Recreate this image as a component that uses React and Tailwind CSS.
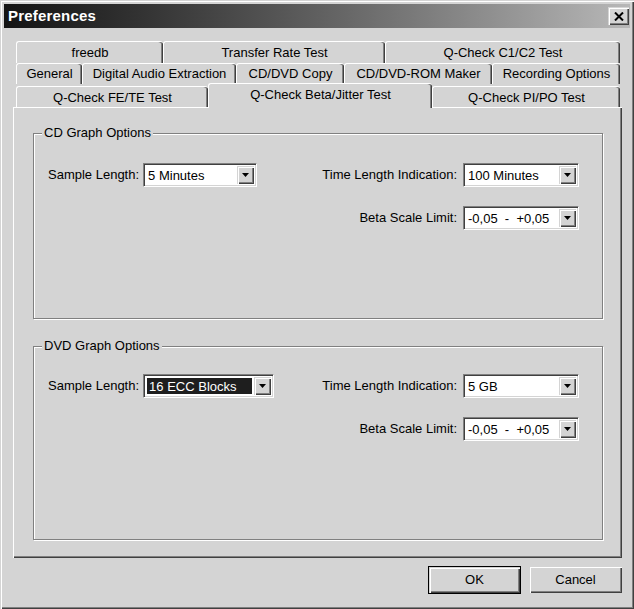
import React from 'react';

const FONT = { fontFamily: '"Liberation Sans", Arial, sans-serif' };

// raised / sunken win2k bevels
const RAISED = 'shadow-[inset_1px_1px_0_#d4d4d4,inset_2px_2px_0_#ffffff,inset_-1px_-1px_0_#404040,inset_-2px_-2px_0_#808080]';
const TAB = 'flex items-center justify-center bg-[#d4d4d4] border-t border-l border-white rounded-t-[3px] shadow-[inset_-1px_0_0_#404040,inset_-2px_0_0_#808080]';

const Arrow = () => (
  <svg width="7" height="4" viewBox="0 0 7 4"><polygon points="0,0 7,0 3.5,4" fill="#000" /></svg>
);

const Combo = ({ w, value, selected }) => (
  <div className={`flex h-[24px] bg-white border border-t-[#808080] border-l-[#808080] border-r-white border-b-white shadow-[inset_1px_1px_0_#404040,inset_-1px_-1px_0_#d4d4d4] p-[2px] ${w}`}>
    <div className={`flex-1 flex items-center pl-[2px] ${selected ? 'bg-[#1e1e1e] text-white m-[1px] mr-[2px] pl-[1px]' : ''}`}>
      <span className="text-[13px] leading-none whitespace-pre">{value}</span>
    </div>
    <div className={`w-[17px] flex items-center justify-center bg-[#d4d4d4] ${RAISED}`}>
      <Arrow />
    </div>
  </div>
);

const Row = ({ label, children }) => (
  <div className="flex items-center justify-end gap-[6px]">
    <span className="text-[13px]">{label}</span>
    {children}
  </div>
);

const Group = ({ title, h, pt, gap, sampleW, sample, selected, time, beta }) => (
  <div className={`relative border border-[#808080] shadow-[1px_1px_0_#fff,inset_1px_1px_0_#fff] ${h}`}>
    <span className="absolute -top-[9px] left-[8px] bg-[#d4d4d4] px-[2px] text-[13px] leading-[16px]">{title}</span>
    <div className={`flex justify-between pl-[14px] pr-[23px] ${pt}`}>
      <div className="flex items-center gap-[4px] h-[24px]">
        <span className="text-[13px]">Sample Length:</span>
        <Combo w={sampleW} value={sample} selected={selected} />
      </div>
      <div className={`flex flex-col items-end ${gap}`}>
        <Row label="Time Length Indication:"><Combo w="w-[116px]" value={time} /></Row>
        <Row label="Beta Scale Limit:"><Combo w="w-[116px]" value="-0,05  -  +0,05" /></Row>
      </div>
    </div>
  </div>
);

const Btn = ({ children, def }) => (
  <button className={`w-[93px] ${def ? 'h-[28px] border border-black' : 'h-[27px]'} bg-[#d4d4d4] text-[13px]`}>
    <div className={`w-full h-full flex items-center justify-center ${RAISED}`}>{children}</div>
  </button>
);

export default function App() {
  return (
    <div style={FONT} className="w-[634px] h-[609px] bg-[#d4d4d4] text-black p-[4px] flex flex-col shadow-[inset_1px_1px_0_#d4d4d4,inset_2px_2px_0_#ffffff,inset_-1px_-1px_0_#404040,inset_-2px_-2px_0_#808080]">

      {/* title bar */}
      <div className="h-[24px] flex items-center justify-between bg-linear-to-r from-[#141414] to-[#b8b8b8] pl-[4px] pr-[1px]">
        <span className="text-white font-bold text-[15px] tracking-[0.2px]">Preferences</span>
        <div className={`w-[21px] h-[18px] flex items-center justify-center bg-[#d4d4d4] ${RAISED}`}>
          <svg width="10" height="9" viewBox="0 0 10 9">
            <path d="M1 0.5 L9 8.5 M9 0.5 L1 8.5" stroke="#000" strokeWidth="2" />
          </svg>
        </div>
      </div>

      <div className="flex-1 flex flex-col pl-[9px] pr-[8px] pt-[13px]">
        {/* tabs */}
        <div className="ml-[3px] w-[604px] text-[13px]">
          <div className="flex h-[22px]">
            <div className={`${TAB} w-[147px]`}>freedb</div>
            <div className={`${TAB} w-[222px]`}>Transfer Rate Test</div>
            <div className={`${TAB} w-[235px]`}>Q-Check C1/C2 Test</div>
          </div>
          <div className="flex h-[21px]">
            <div className={`${TAB} w-[66px]`}>General</div>
            <div className={`${TAB} w-[154px]`}>Digital Audio Extraction</div>
            <div className={`${TAB} w-[108px]`}>CD/DVD Copy</div>
            <div className={`${TAB} w-[148px]`}>CD/DVD-ROM Maker</div>
            <div className={`${TAB} w-[128px]`}>Recording Options</div>
          </div>
          <div className="flex items-end h-[23px] relative z-10">
            <div className={`${TAB} w-[192px] h-[21px] pt-[2px]`}>Q-Check FE/TE Test</div>
            <div className={`${TAB} w-[224px] h-[25px] -mb-[1px] pb-[3px]`}>Q-Check Beta/Jitter Test</div>
            <div className={`${TAB} w-[188px] h-[21px] pt-[2px]`}>Q-Check PI/PO Test</div>
          </div>
        </div>

        {/* panel */}
        <div className="h-[451px] border-t border-l border-white shadow-[inset_-1px_-1px_0_#404040,inset_-2px_-2px_0_#808080] pl-[19px] pt-[25px] flex flex-col">
          <div className="w-[570px] flex flex-col gap-[27px]">
            <Group title="CD Graph Options" h="h-[186px]" pt="pt-[29px]" gap="gap-[19px]"
              sampleW="w-[114px]" sample="5 Minutes" time="100 Minutes" />
            <Group title="DVD Graph Options" h="h-[194px]" pt="pt-[27px]" gap="gap-[19px]"
              sampleW="w-[131px]" sample="16 ECC Blocks" selected time="5 GB" />
          </div>
        </div>

        {/* buttons */}
        <div className="flex justify-end gap-[8px] mt-[8px]">
          <Btn def>OK</Btn>
          <Btn>Cancel</Btn>
        </div>
      </div>
    </div>
  );
}
